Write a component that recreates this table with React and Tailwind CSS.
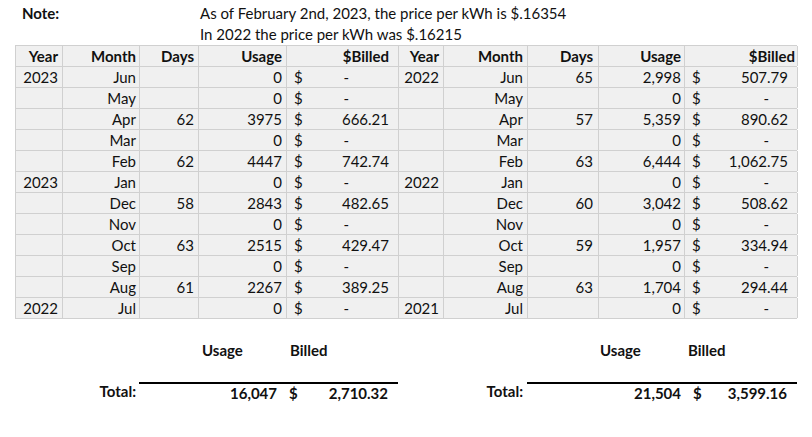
import React from "react";

const W = ["w-[47px]", "w-[77px]", "w-[59px]", "w-[88px]", "w-[112px]", "w-[45px]", "w-[84px]", "w-[71px]", "w-[86px]", "w-[113px]"];

const left = [
  ["2023", "Jun", "", "0", null],
  ["", "May", "", "0", null],
  ["", "Apr", "62", "3975", "666.21"],
  ["", "Mar", "", "0", null],
  ["", "Feb", "62", "4447", "742.74"],
  ["2023", "Jan", "", "0", null],
  ["", "Dec", "58", "2843", "482.65"],
  ["", "Nov", "", "0", null],
  ["", "Oct", "63", "2515", "429.47"],
  ["", "Sep", "", "0", null],
  ["", "Aug", "61", "2267", "389.25"],
  ["2022", "Jul", "", "0", null],
];

const right = [
  ["2022", "Jun", "65", "2,998", "507.79"],
  ["", "May", "", "0", null],
  ["", "Apr", "57", "5,359", "890.62"],
  ["", "Mar", "", "0", null],
  ["", "Feb", "63", "6,444", "1,062.75"],
  ["2022", "Jan", "", "0", null],
  ["", "Dec", "60", "3,042", "508.62"],
  ["", "Nov", "", "0", null],
  ["", "Oct", "59", "1,957", "334.94"],
  ["", "Sep", "", "0", null],
  ["", "Aug", "63", "1,704", "294.44"],
  ["2021", "Jul", "", "0", null],
];

function Cell({ i, className = "", children }) {
  return (
    <div className={`${W[i]} h-[20px] shrink-0 border-r border-[#d0d0d0] leading-[20px] ${className}`}>
      {children}
    </div>
  );
}

function Billed({ i, value, dashPad }) {
  return (
    <Cell i={i} className="flex justify-between pl-[7px] pr-[9px]">
      <span>$</span>
      {value ? <span>{value}</span> : <span className={dashPad}>-</span>}
    </Cell>
  );
}

export default function App() {
  return (
    <div className="w-[812px] h-[437px] bg-white text-[#111] font-['Lato',sans-serif] text-[15px] pt-[3px]">
      {/* note lines */}
      <div className="flex h-[21px] leading-[21px] pl-[22px]">
        <span className="w-[178px] font-bold">Note:</span>
        <span>As of February 2nd, 2023, the price per kWh is $.16354</span>
      </div>
      <div className="flex h-[21px] leading-[21px] pl-[200px]">
        <span>In 2022 the price per kWh was $.16215</span>
      </div>

      {/* table */}
      <div className="ml-[15px] w-[782px] border-l border-t border-[#d0d0d0] bg-[#f0f0f0]">
        <div className="flex border-b border-[#d0d0d0] font-bold text-right">
          <Cell i={0} className="pr-[4px]">Year</Cell>
          <Cell i={1} className="pr-[3px]">Month</Cell>
          <Cell i={2} className="pr-[4px]">Days</Cell>
          <Cell i={3} className="pr-[4px]">Usage</Cell>
          <Cell i={4} className="pr-[9px]">$Billed</Cell>
          <Cell i={5} className="pr-[4px]">Year</Cell>
          <Cell i={6} className="pr-[4px]">Month</Cell>
          <Cell i={7} className="pr-[5px]">Days</Cell>
          <Cell i={8} className="pr-[3px]">Usage</Cell>
          <Cell i={9} className="pr-[2px]">$Billed</Cell>
        </div>
        {left.map((l, k) => {
          const r = right[k];
          return (
            <div key={k} className="flex border-b border-[#d0d0d0] text-right">
              <Cell i={0} className="pr-[4px]">{l[0]}</Cell>
              <Cell i={1} className="pr-[3px]">{l[1]}</Cell>
              <Cell i={2} className="pr-[4px]">{l[2]}</Cell>
              <Cell i={3} className="pr-[4px]">{l[3]}</Cell>
              <Billed i={4} value={l[4]} dashPad="pr-[40px]" />
              <Cell i={5} className="pr-[4px]">{r[0]}</Cell>
              <Cell i={6} className="pr-[4px]">{r[1]}</Cell>
              <Cell i={7} className="pr-[5px]">{r[2]}</Cell>
              <Cell i={8} className="pr-[3px]">{r[3]}</Cell>
              <Billed i={9} value={r[4]} dashPad="pr-[19px]" />
            </div>
          );
        })}
      </div>

      {/* totals */}
      <div className="ml-[15px] mt-[21px] flex h-[21px] leading-[21px] font-bold">
        <div className="w-[187px] shrink-0" />
        <div className="w-[88px] shrink-0">Usage</div>
        <div className="w-[310px] shrink-0">Billed</div>
        <div className="w-[88px] shrink-0">Usage</div>
        <div>Billed</div>
      </div>
      <div className="ml-[15px] mt-[21px] flex h-[21px] leading-[19px] font-bold">
        <div className="w-[124px] shrink-0 text-right pr-[3px]">Total:</div>
        <div className="w-[259px] shrink-0 flex border-t-2 border-black">
          <span className="w-[143px] text-right pr-[5px]">16,047</span>
          <span className="pl-[7px]">$</span>
          <span className="flex-1 text-right pr-[10px]">2,710.32</span>
        </div>
        <div className="w-[129px] shrink-0 text-right pr-[4px]">Total:</div>
        <div className="w-[270px] shrink-0 flex border-t-2 border-black">
          <span className="w-[157px] text-right pr-[3px]">21,504</span>
          <span className="pl-[9px]">$</span>
          <span className="flex-1 text-right pr-[10px]">3,599.16</span>
        </div>
      </div>
    </div>
  );
}
